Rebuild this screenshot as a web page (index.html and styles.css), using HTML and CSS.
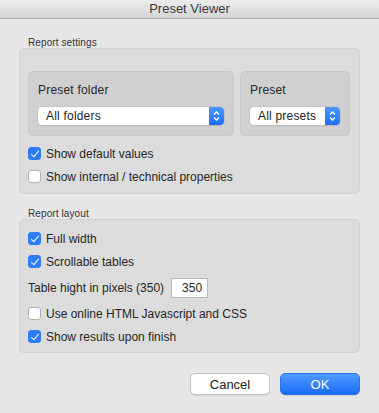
FILE: index.html
```html
<!doctype html>
<html lang="en">
<head>
  <meta charset="utf-8" />
  <title>Preset Viewer</title>
  <link rel="stylesheet" href="styles.css">
</head>
<body>
  <div class="window">
    <div class="titlebar">Preset Viewer</div>

    <div class="content">
      <div class="group-label">Report settings</div>
      <div class="group settings">
        <div class="pickers">
          <div class="picker folder">
            <div class="picker-title">Preset folder</div>
            <div class="select">
              <span class="select-text">All folders</span>
              <span class="stepper"><svg width="7" height="10" viewBox="0 0 7 10"><path d="M1 3.5 L3.5 1 L6 3.5 M1 6.5 L3.5 9 L6 6.5" fill="none" stroke="#fff" stroke-width="1.3"/></svg></span>
            </div>
          </div>
          <div class="picker preset">
            <div class="picker-title">Preset</div>
            <div class="select">
              <span class="select-text">All presets</span>
              <span class="stepper"><svg width="7" height="10" viewBox="0 0 7 10"><path d="M1 3.5 L3.5 1 L6 3.5 M1 6.5 L3.5 9 L6 6.5" fill="none" stroke="#fff" stroke-width="1.3"/></svg></span>
            </div>
          </div>
        </div>
        <label class="check-row"><span class="box on"></span>Show default values</label>
        <label class="check-row"><span class="box"></span>Show internal / technical properties</label>
      </div>

      <div class="group-label">Report layout</div>
      <div class="group layout">
        <label class="check-row"><span class="box on"></span>Full width</label>
        <label class="check-row"><span class="box on"></span>Scrollable tables</label>
        <div class="field-row">
          <span>Table hight in pixels (350)</span>
          <span class="num-input">350</span>
        </div>
        <label class="check-row"><span class="box"></span>Use online HTML Javascript and CSS</label>
        <label class="check-row"><span class="box on"></span>Show results upon finish</label>
      </div>

      <div class="buttons">
        <button class="btn">Cancel</button>
        <button class="btn primary">OK</button>
      </div>
    </div>
  </div>
</body>
</html>
```

FILE: styles.css
```css
body { margin:0; background:#e7e7e7; font-family:"Liberation Sans", Arial, sans-serif; font-size:12px; color:#262626; }
.window { width:379px; height:413px; overflow:hidden; }
.titlebar { height:18px; line-height:18px; text-align:center; font-size:13px; color:#3a3a3a; background:linear-gradient(#ececec, #d6d6d6); border-bottom:1px solid #b4b4b4; }

.content { padding:18px 19px 0 19px; }
.group-label { font-size:10px; line-height:12px; padding-left:9px; margin-bottom:-1px; color:#333; letter-spacing:0.1px; }
.group { background:#dcdcdc; border:1px solid #d3d3d3; border-radius:5px; display:flex; flex-direction:column; }
.settings { padding:22px 9px 5px 8px; margin-bottom:14px; }
.layout { padding:7px 9px 4px 8px; }

.pickers { display:flex; gap:6px; margin-bottom:6px; }
.picker { background:#d0d0d0; border:1px solid #c9c9c9; border-radius:5px; height:63px; padding:0 9px 0 9px; }
.folder { flex:1; }
.preset { width:90px; }
.picker-title { font-size:12px; line-height:14px; margin-top:11px; margin-bottom:10px; letter-spacing:0.2px; }

.select { display:flex; height:18px; background:#fff; border-radius:4px; box-shadow:0 0 0 0.5px #b8b8b8, 0 1px 1px rgba(0,0,0,0.12); overflow:hidden; }
.select-text { flex:1; line-height:18px; padding-left:8px; font-size:12px; color:#222; letter-spacing:0.2px; }
.stepper { width:15px; display:flex; align-items:center; justify-content:center; background:linear-gradient(#4d98ff, #1b6ef8); }

.check-row { display:flex; align-items:center; height:23px; gap:5px; }
.box { width:11px; height:11px; border-radius:3px; background:#fff; border:1px solid #b3b3b3; box-sizing:content-box; position:relative; }
.box.on { background:#2d7cf6; border-color:#2d7cf6; }
.box.on::after { content:""; position:absolute; left:3.5px; top:0.5px; width:3px; height:7px; border:solid #fff; border-width:0 1.6px 1.6px 0; transform:rotate(40deg); }

.field-row { display:flex; align-items:center; height:29px; gap:7px; }
.num-input { width:30px; height:18px; line-height:18px; background:#fff; border:1px solid #b8b8b8; text-align:right; padding-right:5px; }

.buttons { display:flex; justify-content:flex-end; gap:10px; margin-top:20px; }
.btn { width:80px; height:22px; border-radius:5px; font-family:inherit; font-size:13px; background:#fff; border:1px solid #c1c1c1; color:#222; box-shadow:0 1px 1px rgba(0,0,0,0.08); padding:0; }
.btn.primary { background:linear-gradient(#4f9bff, #1a6cf7); border-color:#2a72e8; color:#fff; }
```
